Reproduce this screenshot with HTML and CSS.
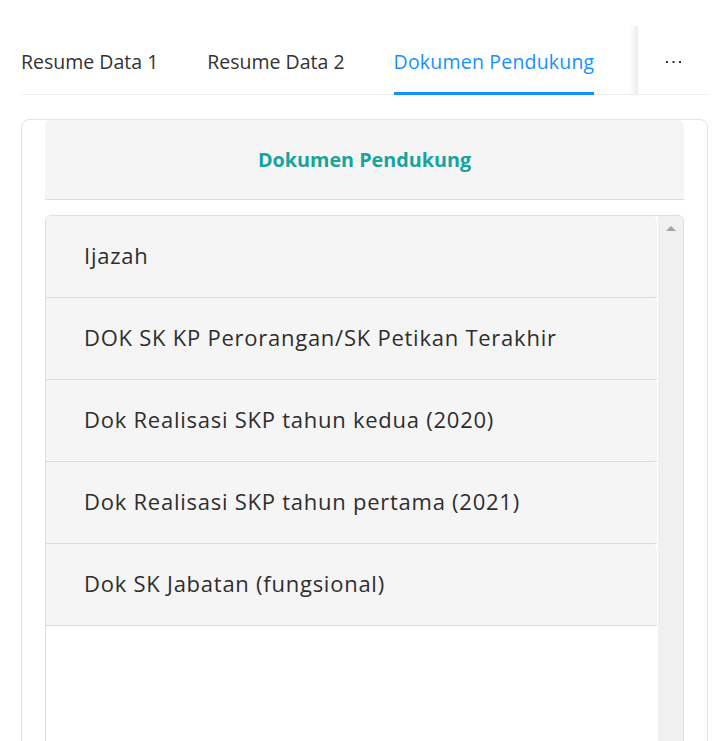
FILE: index.html
```html
<!DOCTYPE html>
<html lang="id">
<head>
<meta charset="utf-8">
<title>Dokumen Pendukung</title>
<link rel="stylesheet" href="styles.css">
</head>
<body>
<div class="page">
  <div class="tabs-nav">
    <div class="tabs-wrap">
      <div class="tabs-list">
        <div class="tab">Resume Data 1</div>
        <div class="tab">Resume Data 2</div>
        <div class="tab active">Dokumen Pendukung</div>
      </div>
    </div>
    <div class="tabs-more">
      <svg width="16" height="4" viewBox="0 0 16 4"><rect x="1" y="1" width="2" height="2" fill="#333"/><rect x="7.5" y="1" width="2" height="2" fill="#333"/><rect x="14" y="1" width="2" height="2" fill="#333"/></svg>
    </div>
  </div>

  <div class="card">
    <div class="card-head">Dokumen Pendukung</div>
    <div class="doc-box">
      <div class="doc-list">
        <div class="doc-item">Ijazah</div>
        <div class="doc-item">DOK SK KP Perorangan/SK Petikan Terakhir</div>
        <div class="doc-item">Dok Realisasi SKP tahun kedua (2020)</div>
        <div class="doc-item">Dok Realisasi SKP tahun pertama (2021)</div>
        <div class="doc-item">Dok SK Jabatan (fungsional)</div>
      </div>
      <div class="scrollbar">
        <div class="scroll-up"></div>
      </div>
    </div>
  </div>
</div>
</body>
</html>
```

FILE: styles.css
```css
html, body {
  margin: 0;
  padding: 0;
  background: #ffffff;
  overflow: hidden;
}

.page {
  padding: 26px 11px 0 21px;
  font-family: "Open Sans", "Noto Sans", sans-serif;
}

.tabs-nav {
  display: flex;
  height: 69px;
  border-bottom: 1px solid #eeeeee;
  box-sizing: border-box;
}

.tabs-wrap {
  flex: 1;
  box-shadow: inset -12px 0 10px -10px rgba(0, 0, 0, 0.12);
}

.tabs-list {
  display: flex;
  gap: 49px;
  height: calc(100% + 1px);
}

.tab {
  font-size: 19.5px;
  color: #333333;
  display: flex;
  align-items: center;
  padding-top: 5px;
  box-sizing: border-box;
  white-space: nowrap;
  border-bottom: 3px solid transparent;
}

.tab.active {
  color: #1890ff;
  border-bottom-color: #1890ff;
  letter-spacing: 0.2px;
}

.tabs-more {
  width: 70px;
  display: flex;
  align-items: center;
  justify-content: center;
  padding-top: 4px;
  box-sizing: border-box;
}

.card {
  margin-top: 24px;
  border: 1px solid #e3e3e3;
  border-radius: 8px;
  padding: 0 23px;
  height: 700px;
}

.card-head {
  height: 79px;
  background: #f5f5f5;
  border-bottom: 1px solid #dddddd;
  border-radius: 6px 6px 0 0;
  display: flex;
  align-items: center;
  justify-content: center;
  font-weight: 700;
  font-size: 19.75px;
  color: #16a49b;
}

.doc-box {
  margin-top: 15px;
  border: 1px solid #dedede;
  border-radius: 6px 6px 0 0;
  display: flex;
  height: 600px;
}

.doc-list {
  flex: 1;
  margin-right: 1px;
}

.doc-item {
  height: 78px;
  padding: 0 0 3px 38px;
  border-bottom: 1px solid #dcdcdc;
  background: #f5f5f5;
  display: flex;
  align-items: center;
  font-size: 22px;
  letter-spacing: 0.75px;
  color: #2e2e2e;
  border-radius: 0 5px 0 0;
}

.doc-item:first-child {
  border-radius: 5px 5px 0 0;
}

.scrollbar {
  width: 25px;
  background: #f0f0f0;
  border-top-right-radius: 5px;
  display: flex;
  justify-content: center;
}

.scroll-up {
  margin-top: 10px;
  width: 0;
  height: 0;
  border-left: 5px solid transparent;
  border-right: 5px solid transparent;
  border-bottom: 5px solid #a3a3a3;
}
```
